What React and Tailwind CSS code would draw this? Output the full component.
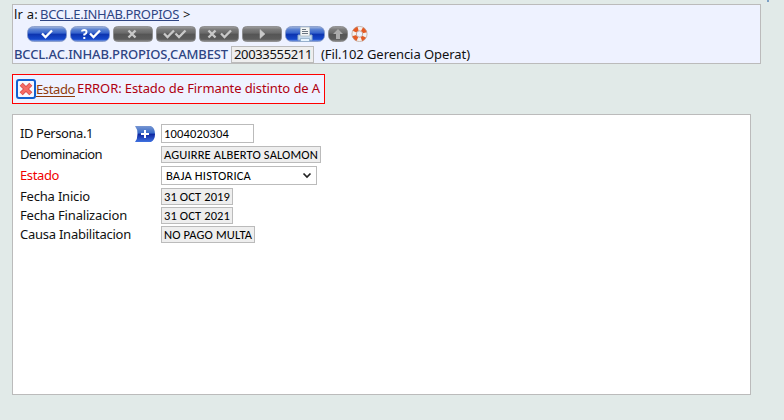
import { useLayoutEffect, useRef, useState } from 'react';

// Spreads its text evenly over a fixed width by adjusting the letter spacing.
function Fit({ w, children, className = '' }) {
  const ref = useRef(null);
  const [gap, setGap] = useState(0);
  useLayoutEffect(() => {
    const range = document.createRange();
    range.selectNodeContents(ref.current);
    const natural = range.getBoundingClientRect().width;
    setGap((w - natural) / children.length);
  }, []);
  return (
    <span ref={ref} className={`inline-block whitespace-nowrap ${className}`} style={{ letterSpacing: `${gap}px`, width: w }}>
      {children}
    </span>
  );
}

const Check = ({ x }) => <path d={`M${x} 7.5l3.5 3.5 6.5-6.5`} fill="none" strokeWidth="2.3" />;
const Cross = ({ x }) => <path d={`M${x} 4.5l7 7m0-7l-7 7`} fill="none" strokeWidth="2.4" />;

function Tool({ blue, children, small }) {
  const w = small ? 20 : 40;
  const id = `${blue ? 'b' : 'g'}${w}`;
  return (
    <svg width={w} height="16" viewBox={`0 0 ${w} 16`} className={`shrink-0 ${blue ? 'stroke-white' : 'stroke-[#c9c9c9]'}`}>
      <defs>
        <linearGradient id={id} x2="0" y2="1">
          <stop offset="0" stopColor={blue ? '#a6b8dc' : '#a0a0a0'} />
          <stop offset=".2" stopColor={blue ? '#5b82d2' : '#7b7b7b'} />
          <stop offset=".45" stopColor={blue ? '#3361cc' : '#696969'} />
          <stop offset=".5" stopColor={blue ? '#0c33ae' : '#555555'} />
          <stop offset=".85" stopColor={blue ? '#1649cc' : '#5c5c5c'} />
          <stop offset="1" stopColor={blue ? '#8eabe4' : '#969696'} />
        </linearGradient>
      </defs>
      <rect x=".5" y=".5" width={w - 1} height="15" rx={blue || small ? 6 : 4} fill={`url(#${id})`} stroke={blue ? '#8095c5' : '#858585'} strokeWidth=".8" />
      {children}
    </svg>
  );
}

function Lifebuoy() {
  return (
    <svg width="17" height="16" viewBox="0 0 17 16">
      <circle cx="8.5" cy="8" r="5.5" fill="none" stroke="#f4f0ee" strokeWidth="4.6" />
      <g transform="rotate(45 8.5 8)">
        <circle cx="8.5" cy="8" r="5.5" fill="none" stroke="#e65a23" strokeWidth="4.4" strokeDasharray="4.8 3.84" strokeDashoffset="2.4" />
      </g>
      <circle cx="8.5" cy="8" r="7.6" fill="none" stroke="#b9a097" strokeWidth=".7" />
      <circle cx="8.5" cy="8" r="3.2" fill="#eef2ff" stroke="#b98770" strokeWidth=".7" />
    </svg>
  );
}

function AddButton() {
  return (
    <svg width="20" height="16" viewBox="0 0 20 16">
      <defs>
        <linearGradient id="add" x2="0" y2="1">
          <stop offset="0" stopColor="#7897d2" />
          <stop offset=".45" stopColor="#3568c8" />
          <stop offset=".5" stopColor="#0b249f" />
          <stop offset="1" stopColor="#3f72e0" />
        </linearGradient>
      </defs>
      <path d="M0 0H16Q20 2 20 8T16 16H0Q2.5 13 2.5 8T0 0Z" fill="url(#add)" />
      <path d="M6 8h8M10 4v8" stroke="white" strokeWidth="2" />
    </svg>
  );
}

function Row({ label, w, className, action, red, children }) {
  return (
    <div className={`flex items-center ${className}`}>
      <div className={`w-[115px] leading-[17px] ${red ? 'text-[#f00000]' : ''}`}><Fit w={w}>{label}</Fit></div>
      <div className="w-[26px]">{action}</div>
      {children}
    </div>
  );
}

function Value({ w, children }) {
  return (
    <div className="flex h-[17px] items-center border border-[#bbbbbb] bg-[#eeeeee] px-[2px] font-[Carlito,Lato,sans-serif] text-[12.5px] leading-[15px] text-black">
      <Fit w={w}>{children}</Fit>
    </div>
  );
}

export default function App() {
  return (
    <div className="flex h-[420px] w-[784px] items-start overflow-hidden bg-[#e1eae8] font-['Trebuchet_MS','Noto_Sans',sans-serif] text-[13px] text-[#111111]">
      <div className="box-content flex w-[749px] flex-col items-start pl-3 pt-1">
        <header className="h-[60px] w-[749px] border border-[#bbbbbb] bg-[#eef2ff] pl-px">
          <div className="flex h-[18px] leading-[18px]">
            <Fit w={24}>lr a:</Fit>
            <a className="ml-[2px] h-[16px] border-b border-[#2f4583] text-[#2f4583]"><Fit w={139}>BCCL.E.INHAB.PROPIOS</Fit></a>
            <span className="ml-1">&gt;</span>
          </div>
          <div className="ml-[13px] mt-[3px] flex h-4 gap-[3px]">
            <Tool blue><Check x={15} /></Tool>
            <Tool blue>
              <path d="M12 5.5Q12 4 14.3 4T16.5 6 14.3 8.5V9.5M14.3 11v2" fill="none" strokeWidth="2" />
              <Check x={20} />
            </Tool>
            <Tool><Cross x={15.5} /></Tool>
            <Tool><Check x={8} /><Check x={19.5} /></Tool>
            <Tool><Cross x={9.5} /><Check x={22} /></Tool>
            <Tool><path d="M18 3.5l5 4.5-5 4.5z" fill="#c9c9c9" strokeWidth=".5" /></Tool>
            <Tool blue>
              <path d="M13 9h14v5H13z" fill="#c4d9ed" stroke="#91afcb" strokeWidth="1" />
              <path d="M15.5 1h9v9h-9z" fill="#f3f5f5" stroke="#b9c5cd" strokeWidth="1" />
              <path d="M17 3.5h4M17 5.5h6M17 7.5h6" stroke="#6a7581" strokeWidth="1" />
              <path d="M15.5 12.5h9v3h-9z" fill="#e8f5ff" stroke="#87a5c0" strokeWidth=".7" />
            </Tool>
            <Tool small><path d="M10 3l5 5h-3v5H8V8H5z" fill="#aaaaaa" stroke="none" /></Tool>
            <Lifebuoy />
          </div>
          <div className="mt-[4px] flex h-[17px] items-center leading-[17px]">
            <Fit w={214} className="font-medium text-[#2f4583]">BCCL.AC.INHAB.PROPIOS,CAMBEST</Fit>
            <div className="ml-[3px] h-[17px] w-[83px] border border-[#bbbbbb] bg-[#eeeeee] pl-[2px] leading-[15px]"><Fit w={78}>20033555211</Fit></div>
            <Fit w={149} className="ml-[7px]">(Fil.102 Gerencia Operat)</Fit>
          </div>
        </header>
        <section className="mt-[10px] flex h-[30px] w-[313px] items-center border border-[#ff0000] bg-[#eef2ff] pl-[3px] text-[#b00010]">
          <button className="mb-px flex h-5 w-5 shrink-0 items-center justify-center rounded-[3px] border-2 border-[#1260d0] bg-[#f6f8ff]">
            <svg width="14" height="14" viewBox="0 0 14 14" className="shrink-0">
              <path d="M2.2 2.2l9.6 9.6m0-9.6l-9.6 9.6" stroke="#d64646" strokeWidth="4.3" />
              <path d="M2.4 2.4l9.2 9.2m0-9.2l-9.2 9.2" stroke="#f56c66" strokeWidth="2.8" />
            </svg>
          </button>
          <a className="mb-px h-[16px] border-b border-[#8f3b0c] leading-[16px] text-[#8f3b0c]"><Fit w={39}>Estado</Fit></a>
          <Fit w={243} className="ml-[2px]">ERROR: Estado de Firmante distinto de A</Fit>
        </section>
        <main className="mt-[10px] h-[281px] w-[739px] border border-[#bbbbbb] bg-white pl-[7px] pt-[9px]">
          <Row label="ID Persona.1" w={73} className="h-[19px]" action={<AddButton />}>
            <div className="flex h-[19px] w-[93px] items-center border border-[#bbbbbb] pl-[2px] pt-px font-[Carlito,Lato,sans-serif] text-[12.5px] leading-[16px] text-black"><Fit w={65}>1004020304</Fit></div>
          </Row>
          <Row label="Denominacion" w={82} className="mt-[3px] h-[17px]"><Value w={154}>AGUIRRE ALBERTO SALOMON</Value></Row>
          <Row label="Estado" w={39} red className="mt-[3px] h-[19px]">
            <div className="flex h-[19px] w-[156px] items-center justify-between border border-[#bbbbbb] pl-[4px] pr-1 font-[Carlito,Lato,sans-serif] text-[12.5px] leading-[16px] text-black">
              <Fit w={85} className="pt-px">BAJA HISTORICA</Fit>
              <svg width="10" height="7" viewBox="0 0 10 7"><path d="M1.5 1.5L5 5l3.5-3.5" fill="none" stroke="#222222" strokeWidth="1.7" /></svg>
            </div>
          </Row>
          <Row label="Fecha Inicio" w={70} className="mt-[3px] h-[17px]"><Value w={66}>31 OCT 2019</Value></Row>
          <Row label="Fecha Finalizacion" w={107} className="mt-[2px] h-[17px]"><Value w={66}>31 OCT 2021</Value></Row>
          <Row label="Causa Inabilitacion" w={111} className="mt-[2px] h-[17px]"><Value w={88}>NO PAGO MULTA</Value></Row>
        </main>
      </div>
      <div className="ml-[6px] h-[2px] w-[2px] bg-[#7ba0c4]" />
    </div>
  );
}
